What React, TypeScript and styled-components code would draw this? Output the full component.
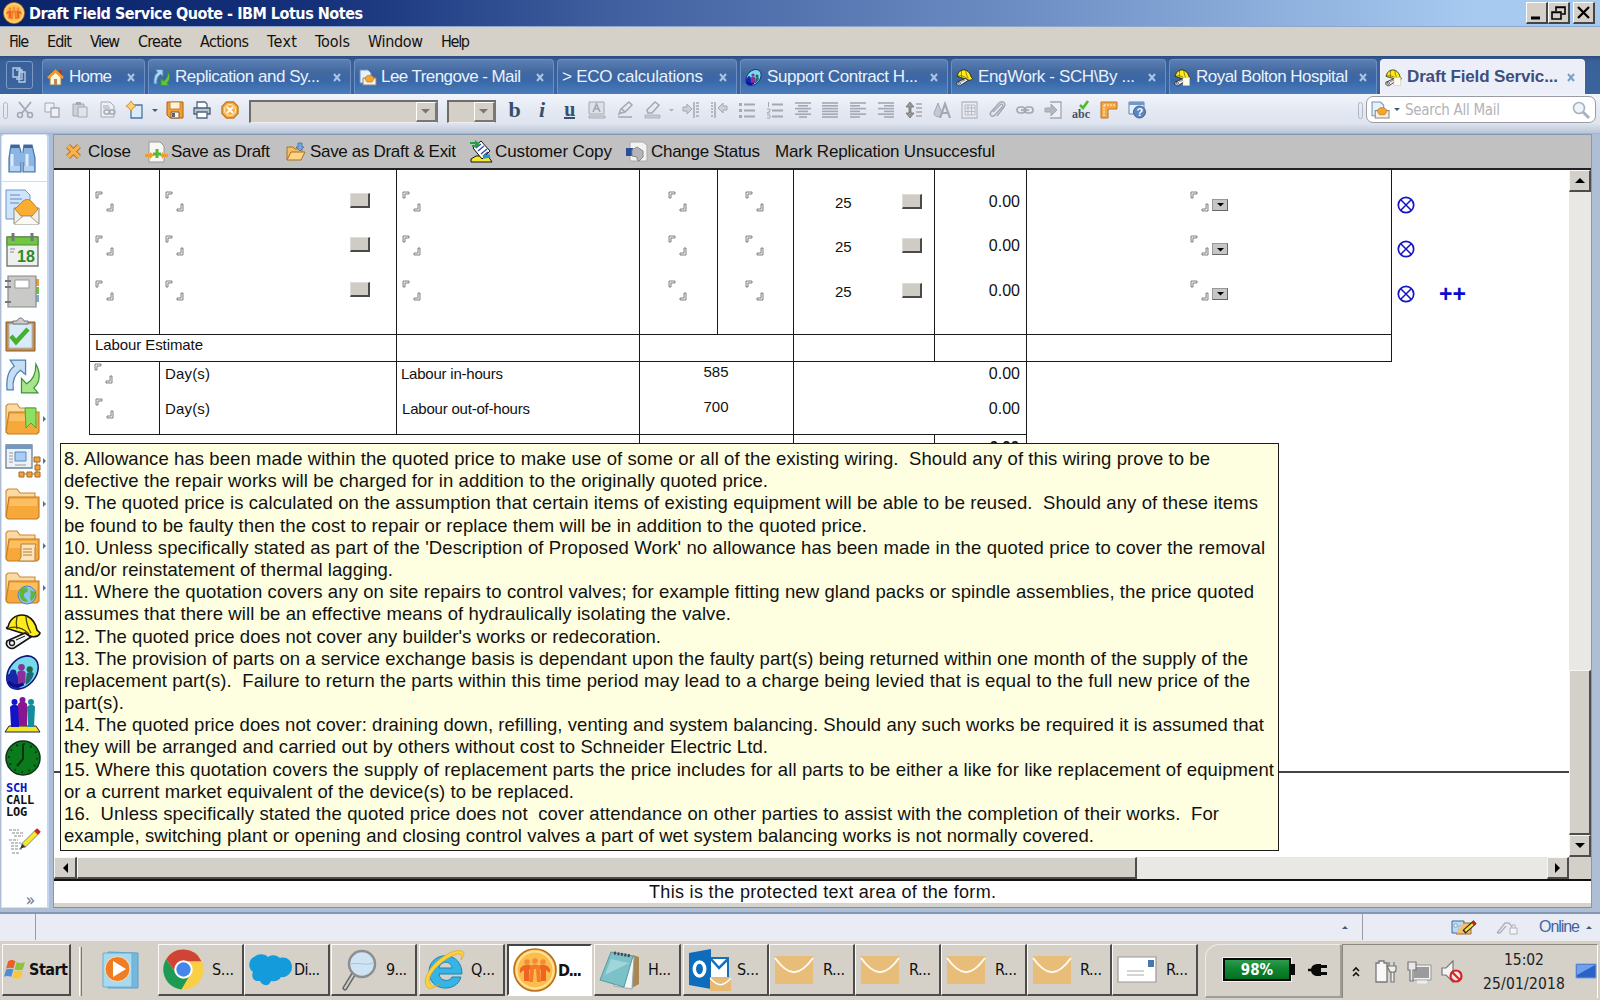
import React, { useLayoutEffect, useRef, useState } from "react";
import styled, { createGlobalStyle } from "styled-components";

const GlobalStyle = createGlobalStyle`
  html, body { margin: 0; padding: 0; overflow: hidden; }
  body { font-family: "Liberation Sans", Arial, sans-serif; color: #111; }
  * { box-sizing: border-box; }
  svg { display: block; flex: none; overflow: visible; }
`;

const arial = `"Liberation Sans", Arial, sans-serif`;
const tahoma = `"DejaVu Sans Condensed", "DejaVu Sans", Tahoma, sans-serif`;

/* Text run whose letter spacing is tuned so that it fills a given width */
const Run = styled.span<{ $w: number }>`
  display: block;
  flex: none;
  width: ${(p) => p.$w}px;
  white-space: pre;
`;
const Fit = ({ w, children }: { w: number; children: string }) => {
  const ref = useRef<HTMLSpanElement>(null);
  const [gap, setGap] = useState(0);
  useLayoutEffect(() => {
    const el = ref.current;
    if (!el) return;
    const natural = el.getBoundingClientRect().width;
    setGap((w - natural) / Math.max(children.length - 1, 1));
  }, [w, children]);
  return (
    <Run $w={w}>
      <span ref={ref} style={{ letterSpacing: gap }}>{children}</span>
    </Run>
  );
};

const Screen = styled.div`
  width: 1600px;
  height: 1000px;
  display: flex;
  flex-direction: column;
  overflow: hidden;
  background: #a9bbd1;
`;

/* ---------- title bar and menu ---------- */
const TitleBar = styled.header`
  height: 27px;
  flex: none;
  display: flex;
  align-items: center;
  padding: 0 5px 0 3px;
  background: linear-gradient(90deg, #0a2469 0%, #15317a 20%, #3f5f9f 38%, #6d8ec4 64%, #a6caf0 92%);
  border-bottom: 1px solid #8ea6cc;
  color: #fff;
  font: bold 16px ${tahoma};
`;
const TitleText = styled.div`margin-left: 4px;`;
const WinButtons = styled.div`
  margin-left: auto;
  display: flex;
`;
const WinButton = styled.div<{ $gap?: boolean }>`
  width: 22px;
  height: 22px;
  margin-left: ${(p) => (p.$gap ? 3 : 0)}px;
  background: #d4d0c8;
  border: 1px solid #fff;
  border-right: 2px solid #454545;
  border-bottom: 2px solid #454545;
`;
const MenuBar = styled.nav`
  height: 29px;
  flex: none;
  display: flex;
  align-items: center;
  gap: 18px;
  padding-left: 9px;
  background: #d5d0c8;
  font: 16px ${tahoma};
`;

/* ---------- tabs ---------- */
const TabBar = styled.div`
  height: 38px;
  flex: none;
  display: flex;
  align-items: flex-end;
  padding-left: 6px;
  background: linear-gradient(180deg, #2c4c7c 0, #3a6099 5px, #39659f 100%);
`;
const Windows = styled.div`
  width: 27px;
  height: 28px;
  margin: 0 9px 5px 0;
  display: flex;
  align-items: center;
  justify-content: center;
  border: 1px solid #7d9ac4;
  border-radius: 3px;
`;
const Tab = styled.div<{ $w: number; $active?: boolean }>`
  width: ${(p) => p.$w}px;
  height: 35px;
  margin-right: 3px;
  display: flex;
  align-items: center;
  gap: 5px;
  padding: 0 9px 0 4px;
  border: 1px solid ${(p) => (p.$active ? "#f2f4fa" : "#6c90c3")};
  border-bottom: none;
  border-radius: 4px 4px 0 0;
  color: ${(p) => (p.$active ? "#3c4f80" : "#e9f2fc")};
  font: ${(p) => (p.$active ? "bold " : "")}17px ${arial};
  background: ${(p) => (p.$active ? "#eceff7" : "linear-gradient(180deg,#5a7fb4 0,#43699f 35%,#3967a8 60%,#4a7dbd 100%)")};
  & > svg:last-child { margin-left: auto; }
`;

/* ---------- toolbar ---------- */
const ToolBar = styled.div`
  height: 39px;
  flex: none;
  display: flex;
  align-items: flex-start;
  padding: 1px 3px 0;
  background: linear-gradient(180deg, #f1f4fa 0, #e4e8f2 45%, #dfe4ef 75%, #b9c6d9 100%);
`;
const Grip = styled.div`
  width: 5px;
  height: 17px;
  margin-top: 7px;
  border: 1px solid #aeb7c6;
  border-radius: 3px;
`;
const Cell = styled.div<{ $w?: number }>`
  width: ${(p) => p.$w ?? 27.6}px;
  height: 30px;
  flex: none;
  display: flex;
  align-items: center;
  justify-content: center;
`;
const Letter = styled.span<{ $kind: "b" | "i" | "u" }>`
  font: bold 22px "Liberation Serif", serif;
  line-height: 20px;
  color: #35506e;
  font-style: ${(p) => (p.$kind === "i" ? "italic" : "normal")};
  ${(p) => p.$kind === "u" && "font-size: 20px; line-height: 15px; border-bottom: 2px solid #35506e;"}
`;
const Combo = styled.div<{ $w: number; $gap: number }>`
  width: ${(p) => p.$w}px;
  height: 23px;
  margin: 5px 0 0 ${(p) => p.$gap}px;
  flex: none;
  display: flex;
  justify-content: flex-end;
  background: #d4d0c8;
  border: 2px solid #6d6d6d;
  border-right: 1px solid #777;
  border-bottom: 1px solid #eee;
`;
const ComboButton = styled.div`
  width: 21px;
  display: flex;
  align-items: center;
  justify-content: center;
  border: 1px solid #fff;
  border-right: 2px solid #777;
  border-bottom: 2px solid #777;
`;
const Search = styled.div`
  width: 230px;
  height: 27px;
  margin: 1px 1px 0 3px;
  padding: 0 5px 0 4px;
  display: flex;
  align-items: center;
  background: #fff;
  border: 1.5px solid #999ca4;
  border-radius: 7px;
  color: #b3b3b7;
  font: 15px ${tahoma};
  & > svg:last-child { margin-left: auto; }
`;
const Push = styled.div`flex: 1;`;

/* ---------- work area ---------- */
const Work = styled.main`
  height: 781px;
  flex: none;
  display: flex;
  background: #aebfd5;
  border-top: 1px solid #a7b5c8;
  border-bottom: 2px solid #8397b3;
`;
const Side = styled.aside`
  width: 48px;
  height: 774px;
  margin: 0 0 0 1px;
  flex: none;
  display: flex;
  flex-direction: column;
  background: #fdfeff;
  border: 1px solid #d5e2f6;
  border-right: 2px solid #c3d5ef;
  border-radius: 4px 4px 0 0;
`;
const SideSlot = styled.div<{ $h?: number; $line?: boolean }>`
  height: ${(p) => p.$h ?? 42.35}px;
  flex: none;
  display: flex;
  align-items: center;
  padding-left: 3px;
  border-bottom: ${(p) => (p.$line ? "1px solid #d8dae2" : "none")};
  gap: 3px;
`;
const CallLog = styled.div`
  font: bold 12px/12px "DejaVu Sans Mono", monospace;
  letter-spacing: -0.2px;
  color: #111;
  padding-left: 1px;
  & > div:first-child { color: #0a16c8; }
`;
const More = styled.div`
  margin-top: auto;
  padding: 0 12px 0 0;
  text-align: right;
  color: #6a7690;
  font: 17px/14px ${tahoma};
`;
const Pane = styled.section`
  width: 1539px;
  height: 774px;
  margin-left: 4px;
  display: flex;
  flex-direction: column;
  background: #fff;
  border: 1px solid #8698b3;
  border-bottom: 1px solid #7c8da8;
`;
const ActionBar = styled.div`
  height: 35px;
  flex: none;
  display: flex;
  align-items: center;
  padding-left: 11px;
  background: #c1c1c1;
  border-bottom: 2px solid #222;
  font: 17px ${arial};
`;
const Action = styled.div<{ $w: number }>`
  width: ${(p) => p.$w}px;
  flex: none;
  display: flex;
  align-items: center;
`;
const ActionIcon = styled.div<{ $w: number }>`
  width: ${(p) => p.$w}px;
  flex: none;
`;
const Viewport = styled.div`
  height: 687px;
  flex: none;
  display: flex;
`;
const Page = styled.div`
  position: relative;
  width: 1515px;
  flex: none;
  padding-left: 35px;
  overflow: hidden;
`;
const Columns = styled.div<{ $h: number }>`
  display: flex;
  height: ${(p) => p.$h}px;
`;
const Column = styled.div<{ $w: number; $open?: boolean; $bottom?: boolean; $pad?: number }>`
  width: ${(p) => p.$w}px;
  flex: none;
  padding-top: ${(p) => p.$pad ?? 0}px;
  border-left: ${(p) => (p.$open ? "none" : "1.4px solid #1a1a1a")};
  border-bottom: ${(p) => (p.$bottom === false ? "none" : "1.4px solid #1a1a1a")};
`;
const Slot = styled.div<{ $left?: number; $h?: number }>`
  height: ${(p) => p.$h ?? 44.4}px;
  display: flex;
  align-items: flex-start;
  padding-left: ${(p) => p.$left ?? 5}px;
  & > svg { margin-top: 10px; }
`;
const Value = styled.div<{ $w: number; $top: number; $left?: number; $align?: string; $size?: number; $bold?: boolean }>`
  width: ${(p) => p.$w}px;
  flex: none;
  margin: ${(p) => p.$top}px 0 0 ${(p) => p.$left ?? 0}px;
  text-align: ${(p) => p.$align ?? "left"};
  font: ${(p) => (p.$bold ? "bold " : "")}${(p) => p.$size ?? 15}px/18px ${arial};
  white-space: pre;
`;
const GreyButton = styled.div<{ $gap: number; $top: number }>`
  width: 20px;
  height: 15px;
  flex: none;
  margin: ${(p) => p.$top}px 0 0 ${(p) => p.$gap}px;
  background: #cfccc6;
  border: 1px solid #dedcd8;
  border-right: 2px solid #4a4a4a;
  border-bottom: 2px solid #4a4a4a;
`;
const DropMark = styled.div`
  width: 16px;
  height: 12px;
  margin: 18px 0 0 2px;
  display: flex;
  align-items: center;
  justify-content: center;
  background: #c6c6c6;
  border: 1px solid #999;
  border-right-color: #666;
  border-bottom-color: #666;
  & > svg { margin: 0; }
`;
const Plus = styled.span`
  margin: 12px 0 0 24px;
  color: #0a0ad0;
  font: bold 23px/24px ${arial};
`;
const Rule = styled.div`
  height: 1.5px;
  margin: 328px 0 0 -35px;
  background: #444;
`;
const Note = styled.div`
  position: absolute;
  left: 6px;
  top: 273px;
  width: 1219px;
  height: 408px;
  padding: 4px 0 0 3px;
  background: #feffe0;
  border: 1.4px solid #1b1b1b;
  font: 18.500px ${arial};
`;
const NoteLine = styled.div`
  height: 22.2px;
  line-height: 22.2px;
`;

/* ---------- scroll bars ---------- */
const VScroll = styled.div`
  width: 22px;
  display: flex;
  flex-direction: column;
  background: #e9e8e5;
`;
const HScroll = styled.div`
  height: 22px;
  flex: none;
  display: flex;
  background: #e9e8e5;
`;
const Raised = styled.div<{ $w?: number; $h?: number }>`
  width: ${(p) => p.$w ?? 22}px;
  height: ${(p) => p.$h ?? 22}px;
  flex: none;
  display: flex;
  align-items: center;
  justify-content: center;
  background: #d3d0c9;
  border: 1px solid #f8f7f5;
  border-right: 2px solid #4d4d4d;
  border-bottom: 2px solid #4d4d4d;
`;
const Corner = styled.div`width: 22px; background: #d3d0c9;`;
const Protected = styled.div`
  height: 28px;
  flex: none;
  display: flex;
  justify-content: center;
  border-top: 2px solid #111;
  border-bottom: 4px solid #d6d3cc;
  font: 18px/23px ${arial};
`;

/* ---------- status bar ---------- */
const Status = styled.div`
  height: 26px;
  flex: none;
  display: flex;
  align-items: center;
  background: #e9ecf5;
  color: #41649f;
  font: 16px ${arial};
`;
const StatusPart = styled.div<{ $w: number; $line?: boolean }>`
  width: ${(p) => p.$w}px;
  height: 26px;
  flex: none;
  display: flex;
  align-items: center;
  justify-content: flex-end;
  border-right: ${(p) => (p.$line ? "1px solid #9a9da6" : "none")};
`;

/* ---------- taskbar ---------- */
const TaskBar = styled.footer`
  flex: 1;
  display: flex;
  align-items: flex-start;
  padding: 3px 2px 0;
  background: #d5d1c9;
  border-top: 1px solid #eeece8;
  font: 16px ${tahoma};
`;
const Task = styled.div<{ $w: number; $active?: boolean; $gap?: number }>`
  width: ${(p) => p.$w}px;
  height: 52px;
  margin-right: ${(p) => p.$gap ?? 1}px;
  flex: none;
  display: flex;
  align-items: center;
  justify-content: space-between;
  padding: 0 8px 0 4px;
  font-weight: ${(p) => (p.$active ? "bold" : "normal")};
  background: ${(p) => (p.$active ? "#fff" : "#d5d1c9")};
  border: 2px solid;
  border-color: ${(p) => (p.$active ? "#444 #fff #fff #444" : "#fbfaf8 #4c4c4c #4c4c4c #fbfaf8")};
  border-top-width: ${(p) => (p.$active ? 2 : 1)}px;
  border-left-width: ${(p) => (p.$active ? 2 : 1)}px;
`;
const StartButton = styled(Task)`
  justify-content: flex-start;
  gap: 2px;
  padding: 0 0 0 1px;
`;
const Divider = styled.div`
  width: 3px;
  height: 49px;
  margin: 3px 0 0 8px;
  border-left: 1px solid #fff;
  border-right: 1px solid #777;
`;
const Quick = styled.div`
  width: 76px;
  height: 52px;
  display: flex;
  align-items: center;
  padding-left: 20px;
`;
const Power = styled.div`
  width: 137px;
  height: 54px;
  margin-left: 7px;
  padding: 0 0 2px 17px;
  display: flex;
  align-items: center;
  border: 1px solid #eeece6;
  border-right: 2px solid #a09d97;
  border-bottom: 2px solid #a09d97;
  border-radius: 14px 3px 0 0;
`;
const Battery = styled.div`
  width: 68px;
  height: 23px;
  display: flex;
  align-items: center;
  justify-content: center;
  color: #fff;
  font: bold 15px ${tahoma};
  background: linear-gradient(180deg, #2f9a4c 0, #0f8533 45%, #05701f 100%);
  border: 2px solid #0a0a0a;
  outline: 1px solid #f3f3ee;
`;
const Nub = styled.div`
  width: 4px;
  height: 11px;
  margin-right: 12px;
  background: #0a0a0a;
`;
const Tray = styled.div`
  flex: 1;
  height: 54px;
  display: flex;
  align-items: center;
  padding-left: 9px;
  border-top: 1px solid #8a8780;
  border-left: 1px solid #8a8780;
  border-right: 1px solid #fff;
`;
const Clock = styled.div`
  width: 98px;
  height: 48px;
  display: flex;
  flex-direction: column;
  align-items: center;
  justify-content: space-between;
  margin: 0 3px 0 11px;
  font: 15.5px/24px ${tahoma};
  color: #222;
`;
const TrayIcon = styled.div<{ $w: number }>`width: ${(p) => p.$w}px;`;

/* ---------- small drawings ---------- */
const Svg = ({ w = 18, h = w, vb, children }: { w?: number; h?: number; vb?: string; children: React.ReactNode }) => (
  <svg width={w} height={h} viewBox={vb ?? `0 0 ${w} ${h}`} fill="none">{children}</svg>
);
const Tri = ({ dir, s = 1, c = "#000" }: { dir: "u" | "d" | "l" | "r"; s?: number; c?: string }) => {
  const d = { u: "M0 5 5 0l5 5Z", d: "M0 0h10L5 5Z", l: "M5 0v10L0 5Z", r: "M0 0v10l5-5Z" }[dir];
  const flat = dir === "u" || dir === "d";
  return <Svg w={(flat ? 10 : 5) * s} h={(flat ? 5 : 10) * s} vb={flat ? "0 0 10 5" : "0 0 5 10"}><path d={d} fill={c} /></Svg>;
};
const CloseX = ({ c = "#a9c6e6" }) => <Svg w={8} h={9}><path d="m1 1 6 7M7 1 1 8" stroke={c} strokeWidth="2" /></Svg>;

const LotusIcon = ({ s = 22 }) => (
  <Svg w={s} vb="0 0 44 44">
    <circle cx="22" cy="22" r="21" fill="#fbbd4c" stroke="#b96f1d" strokeWidth="1.600" />
    <circle cx="22" cy="22" r="18.500" stroke="#ffe39b" strokeWidth="2" />
    <path d="M17 17c-8-1-11 3-10 8l4-3v11h5V22l2-2ZM27 17c8-1 11 3 10 8l-4-3v11h-5V22l-2-2Z" fill="#ee6420" />
    <path d="M17 18c3-2 7-2 10 0l1 16h-4l-1-13h-2l-1 13h-4Z" fill="#f47b2a" />
    <circle cx="14" cy="14" r="2.800" fill="#f58a3c" /><circle cx="22" cy="13" r="2.800" fill="#f58a3c" /><circle cx="30" cy="14" r="2.800" fill="#f58a3c" />
  </Svg>
);
const HomeIcon = () => (
  <Svg w={17}>
    <path d="M3 8v8h11V8L8.500 3Z" fill="#fff3d8" stroke="#9a7c56" />
    <path d="M12 2h2v4" stroke="#b23a20" strokeWidth="2" />
    <path d="M1 9 8.500 2 16 9" stroke="#f09a2c" strokeWidth="2.500" /><path d="M7 10h3v6H7Z" fill="#b08a5c" />
  </Svg>
);
const Replicate = ({ s = 17, side = false }) => (
  <Svg w={s} vb="0 0 34 34">
    <path d="M2 30C1 18 3 11 9 7L5 1h15v14l-5-4C9 15 7 21 8 30Z" fill={side ? "#c6ddf5" : "#a7d5ee"} stroke="#4b80b5" strokeWidth={side ? 1.200 : 2} />
    <path d="M30 5c5 9 4 18-2 23l4 5H16V19l5 5c7-4 9-11 9-19Z" fill={side ? "#a8e48c" : "#62c43c"} stroke="#3a9636" strokeWidth={side ? 1.200 : 2} />
  </Svg>
);
const MailTabIcon = ({ s = 17 }) => (
  <Svg w={s} vb="0 0 17 17">
    <path d="M1 1h8l3 3v10H1Z" fill="#e6f1fd" stroke="#6f94bf" />
    <path d="M4 9h13v7H4Z" fill="#f4f1ea" stroke="#8c8878" /><path d="M6 10c0-5 9-5 9 0l-2 3H8Z" fill="#f6a62c" stroke="#bd7c1c" strokeWidth=".7" />
  </Svg>
);
const GlobeTeam = ({ s = 17 }) => (
  <Svg w={s} vb="0 0 34 34">
    <ellipse cx="17" cy="17" rx="13" ry="18" transform="rotate(40 17 17)" fill="#74dbea" stroke="#12127a" strokeWidth="1.500" />
    <path d="M2 20c4-4 7-4 10-1l3 12C8 36 2 32 2 24Z" fill="#1826a8" />
    <circle cx="8" cy="17" r="3" fill="#1826a8" /><circle cx="16" cy="12" r="3.200" fill="#8c2f9c" />
    <path d="M12 17c2-3 6-3 8 0v10l-7 4Z" fill="#8c2f9c" /><circle cx="24" cy="14" r="3" fill="#226846" />
    <path d="M21 18c2-2 6-2 7 0-1 5-4 9-8 11Z" fill="#1c6c74" /><path d="M3 26c5 5 10 5 15 2" stroke="#0c0c90" strokeWidth="3" />
  </Svg>
);
const HardHat = ({ s = 17, page = false }) => (
  <Svg w={s} vb="0 0 36 36">
    <path d="M3 14C5 4 14 0 22 3c6 3 9 9 10 14l3 3c-1 4-8 5-12 2L4 16c-3 0-3-2-1-2Z" fill="#ffec1f" stroke="#151500" strokeWidth="1.600" />
    <path d="M12 3c-1 5-1 9 0 13M21 3c0 7 2 12 5 17M4 15c7-2 14 0 20 6" stroke="#4b4700" strokeWidth="1.300" />
    <path d="m2 28 18-8 6 4-17 11c-5 2-9-3-7-7Z" fill="#f3f3f3" stroke="#111" strokeWidth="1.600" /><circle cx="7" cy="30" r="2.500" stroke="#111" strokeWidth="1.300" />
    <path d="m11 27 9-4" stroke="#111" strokeWidth="1" />
    {page && <path d="M19 18h14v17H19Z" fill="#fffbea" stroke="#bbb" />}
  </Svg>
);

const tabs = [
  { w: 103, icon: <HomeIcon />, text: "Home", tw: 43 },
  { w: 203, icon: <Replicate />, text: "Replication and Sy...", tw: 145 },
  { w: 200, icon: <MailTabIcon />, text: "Lee Trengove - Mail", tw: 140 },
  { w: 180, icon: null, text: "> ECO calculations", tw: 141 },
  { w: 208, icon: <GlobeTeam />, text: "Support Contract H...", tw: 151 },
  { w: 215, icon: <HardHat />, text: "EngWork - SCH\\By ...", tw: 157 },
  { w: 208, icon: <HardHat page />, text: "Royal Bolton Hospital", tw: 152 },
  { w: 205, icon: <HardHat page />, text: "Draft Field Servic...", tw: 151 },
];

/* toolbar drawings, greyed ones first */
const G = "#a3a8b3";
const lines = (rows: [number, number][]) => (
  <Svg w={18}>{rows.map(([a, b], i) => <path key={i} d={`M${a} ${2 + i * 2.8}H${b}`} stroke={G} strokeWidth="1.600" />)}</Svg>
);
const leftTools = [
  <Svg w={18}><path d="m3 1 9 11M15 1 6 12" stroke={G} strokeWidth="1.800" /><circle cx="4" cy="14" r="2.500" stroke={G} strokeWidth="1.600" /><circle cx="14" cy="14" r="2.500" stroke={G} strokeWidth="1.600" /></Svg>,
  <Svg w={18}><path d="M2 2h9v9H2Z" fill="#eef1f7" stroke={G} /><path d="M8 7h8v9H8Z" fill="#eef1f7" stroke={G} strokeWidth="1.300" /></Svg>,
  <Svg w={18}><path d="M2 3h11v12H2Z" fill="#cdd1da" stroke={G} /><path d="M5 1h5v3H5Z" fill={G} /><path d="M7 6h9v10H7Z" fill="#dfe3eb" stroke={G} /></Svg>,
  <Svg w={18}><path d="M2 1h9l4 4v11H2Z" fill="#eceff5" stroke={G} /><path d="M4 5h6M4 7h7" stroke={G} /><rect x="5" y="9" width="6" height="4" rx="2" stroke={G} strokeWidth="1.400" /><rect x="10" y="9" width="6" height="4" rx="2" stroke={G} strokeWidth="1.400" /></Svg>,
  <Svg w={18}><path d="M5 4h11v13H5Z" fill="#dcebfa" stroke="#4c75a5" strokeWidth="1.300" /><path d="m5 0 2 3 3 2-3 2-2 3-2-3-3-2 3-2Z" fill="#ffd27a" stroke="#d8902a" /></Svg>,
];
const leftTools2 = [
  <Svg w={18}><path d="M1 1h16v16H4l-3-3Z" fill="#f59f35" stroke="#a8601a" /><path d="M4 1h10v7H4Z" fill="#fff2da" stroke="#b8762a" strokeWidth=".8" /><path d="M5 11h8v6H5Z" fill="#f5f5f5" stroke="#8a5a28" /><path d="M6 12h3v4H6Z" fill="#55657c" /></Svg>,
  <Svg w={18}><path d="M4 7V1h8l2 2v4" fill="#fff" stroke="#52667f" strokeWidth="1.300" /><path d="M1 7h16v6H1Z" fill="#bac6d6" stroke="#4a5e79" strokeWidth="1.300" /><path d="M4 11h10v6H4Z" fill="#fff" stroke="#52667f" strokeWidth="1.300" /></Svg>,
  <Svg w={18}><path d="M5.500 1h7L17 5.500v7L12.500 17h-7L1 12.500v-7Z" fill="#f7b045" stroke="#c07c22" strokeWidth="1.400" /><circle cx="9" cy="9" r="5.500" stroke="#fff0cf" /><path d="m6 6 6 6m0-6-6 6" stroke="#fffaf0" strokeWidth="2" /></Svg>,
];
const fmtTools = [
  <Svg w={18}><path d="M1 1h15v12H1ZM1 15h16v2H1Z" fill="#dde1e9" stroke={G} /><path d="M5 11 8.500 3 12 11M6 8h5" stroke={G} strokeWidth="1.700" /></Svg>,
  <Svg w={18}><path d="m3 13 2-5 8-7 3 3-7 7-4 1ZM6 8l3 3M2 16h14" stroke={G} strokeWidth="1.500" /></Svg>,
  <Svg w={18}><path d="m3 9 8-8 4 3-7 8H4Z" stroke={G} strokeWidth="1.500" /><path d="M1 14h15v3H1Z" fill="#c7cbd4" stroke={G} strokeWidth=".7" /></Svg>,
];
const paraTools = [
  <Svg w={18}><path d="M1 6h4V3l5 5-5 5v-3H1Z" fill="#cdd1d9" stroke={G} /><path d="M12 1v16M14 2h3M14 5h3M14 8h3M14 11h3M14 15h3" stroke={G} strokeWidth="1.500" /></Svg>,
  <Svg w={18}><path d="M17 5h-4V2L8 7l5 5V9h4Z" fill="#cdd1d9" stroke={G} /><path d="M5 1v16M1 2h2M1 5h2M1 8h2M1 11h2M1 15h2" stroke={G} strokeWidth="1.500" /></Svg>,
  <Svg w={18}><path d="M1 2h3v3H1ZM1 8h3v3H1ZM1 14h3v3H1Z" fill={G} /><path d="M6 3.500h11M6 9.500h11M6 15.500h11" stroke={G} strokeWidth="1.800" /></Svg>,
  <Svg w={18}><path d="M2.500 1v5M1 8h3v2L1 12h3M1 14h3v3H1" stroke={G} /><path d="M6 3.500h11M6 9.500h11M6 15.500h11" stroke={G} strokeWidth="1.800" /></Svg>,
  lines([[1, 17], [4, 14], [1, 17], [4, 14], [1, 17], [5, 13]]),
  lines([[1, 17], [1, 17], [1, 17], [1, 17], [1, 17], [1, 17]]),
  lines([[1, 17], [1, 11], [1, 17], [1, 11], [1, 17], [1, 11]]),
  lines([[1, 17], [7, 17], [1, 17], [7, 17], [1, 17], [7, 17]]),
  <Svg w={18}><path d="m5 1 4 5H6v6h3l-4 5-4-5h3V6H1Z" fill="#999" stroke="#666" strokeWidth=".7" /><path d="M11 3h6M11 7h6M11 11h6M11 15h6" stroke={G} strokeWidth="1.700" /></Svg>,
  <Svg w={18}><path d="m1 12 4-10 4 10c0 5-8 5-8 0Z" fill="#c3c8d2" stroke={G} /><path d="m7 17 5-14 5 14M9 12h6" stroke={G} strokeWidth="2.200" /></Svg>,
  <Svg w={18}><path d="M1 1h15v16H1Z" fill="#e9ecf2" stroke="#b6bac4" strokeWidth="1.300" /><path d="M4 4h10v10H4ZM4 7h10M4 10.500h10M7 4v10M10.500 4v10" stroke="#b6bac4" /></Svg>,
  <Svg w={18}><path d="m4 11 7-7c2-2 4 0 2 2l-7 8c-3 3-6 0-4-3l8-9c3-3 8 0 5 4l-7 9" stroke={G} strokeWidth="1.400" /></Svg>,
  <Svg w={18}><rect x="1" y="6" width="8" height="6" rx="3" stroke={G} strokeWidth="1.700" /><rect x="9" y="6" width="8" height="6" rx="3" stroke={G} strokeWidth="1.700" /><path d="M5 9h8" stroke={G} strokeWidth="1.700" /></Svg>,
  <Svg w={18}><path d="M6 1h11v16H6" fill="#eceff4" stroke={G} strokeWidth="1.300" /><path d="M1 7h6V3l6 6-6 6v-4H1Z" fill="#b3b8c3" stroke={G} /></Svg>,
  <Svg w={18}><text x="0" y="17" fontFamily="Liberation Serif" fontWeight="bold" fontSize="12" fill="#44505f">abc</text><path d="m8 4 3 3 5-7" stroke="#52b832" strokeWidth="2.600" /></Svg>,
  <Svg w={18}><path d="M1 1h16v7H8v9H1Z" fill="#f6a742" stroke="#b8742a" /><path d="M4 4h11M4 4v11" stroke="#ffe0a6" strokeWidth="1.500" strokeDasharray="2 1" /></Svg>,
  <Svg w={18}><path d="M1 1h15v12H1Z" fill="#e2effc" stroke="#6285b0" /><path d="M1 1h15v3H1Z" fill="#7398c5" /><circle cx="11.500" cy="11" r="6" fill="#5986bd" stroke="#39659b" /><text x="8.500" y="15" fontFamily="Liberation Sans" fontWeight="bold" fontSize="11" fill="#fff">?</text></Svg>,
];

/* side bar drawings */
const Folder = ({ children }: { children?: React.ReactNode }) => (
  <Svg w={35} h={32}>
    <path d="M1 28V3l2-2h9l3 4h15v6" fill="#fbd9a2" stroke="#c98a35" strokeWidth="1.100" />
    <path d="M4 9h30v20l-2 2H3l-2-2Z" fill="#f7a83a" stroke="#c27a1e" strokeWidth="1.100" />
    <path d="M5 11h27v7H4Z" fill="#fbc56f" opacity=".8" />
    {children}
  </Svg>
);
const sideIcons: { icon: React.ReactNode; more?: boolean }[] = [
  { icon: <Svg w={35} h={36}><path d="M1 1h19l5 5v24H1Z" fill="#cfe3fa" stroke="#6c96c9" /><path d="M5 6h10M5 10h12M5 14h9" stroke="#86a9d2" strokeWidth="1.600" /><path d="M9 19h25v16H9Z" fill="#efede6" stroke="#8f8b80" /><path d="m10 20 8-8c3-2 6-2 8 0l7 8-6 7H16Z" fill="#f9ae31" stroke="#c37f1f" /><path d="m9 35 9-8h7l9 8" stroke="#a09b8d" fill="#faf9f4" /></Svg> },
  { icon: <Svg w={35} h={35}><path d="M2 5h31v29H2Z" fill="#eef0ee" stroke="#75796f" strokeWidth="1.400" /><path d="M2 5h31v8H2Z" fill="#6fc83f" stroke="#4c8f36" /><path d="M8 1v8M27 1v8" stroke="#777" strokeWidth="3" /><path d="M5 17h5M5 20h4" stroke="#888" /><text x="12" y="30" fontFamily="Liberation Sans" fontWeight="bold" fontSize="16" fill="#2e8a2a">18</text></Svg> },
  { icon: <Svg w={35} h={35}><path d="M30 5h4v7h-4Z" fill="#f0992c" /><path d="M30 13h4v7h-4Z" fill="#6ac53c" /><path d="M30 21h4v7h-4Z" fill="#7aa9de" /><path d="M3 2h28v31H3Z" fill="#c9c9c7" stroke="#8b8b84" strokeWidth="1.200" /><path d="M10 6h14v8H10Z" fill="#fff" stroke="#999" /><path d="M0 7h6M0 13h6M0 28h6" stroke="#777" strokeWidth="2.200" /></Svg> },
  { icon: <Svg w={31} h={35}><path d="M1 5h29v29H1Z" fill="#c98b48" stroke="#8a5a26" /><path d="M4 7h23v24H4Z" fill="#d9eafb" stroke="#a9bdd2" /><path d="M8 7V4h4c1-4 6-4 7 0h4v3Z" fill="#ccc" stroke="#777" /><path d="m6 19 5 6L23 12" stroke="#46b02e" strokeWidth="4.500" /></Svg> },
  { icon: <Replicate s={35} side /> },
  { more: true, icon: <Folder><path d="M20 5h11v20l-5-5-5 5Z" fill="#8ee062" stroke="#4aa52e" /></Folder> },
  { more: true, icon: <Svg w={35} h={36}><path d="M1 2h26v23H1Z" fill="#edf2f7" stroke="#6e7f96" strokeWidth="1.300" /><path d="M1 2h26v4H1Z" fill="#7498c4" /><path d="M10 9h11v9H10Z" fill="#a9cdf7" stroke="#5a86b8" /><path d="M4 10h4M4 13h4M4 16h4M4 19h4M10 22h11" stroke="#999" /><path d="M17 31h15V17" stroke="#777" /><path d="M14 29h5v5h-5ZM22 29h5v5h-5ZM30 29h5v5h-5ZM30 22h5v5h-5ZM29 14h6v5h-6Z" fill="#f2a13a" stroke="#a86b20" /></Svg> },
  { more: true, icon: <Folder /> },
  { more: true, icon: <Folder><path d="M16 14h15l-1 4v13H14l2-4Z" fill="#fbe5bd" stroke="#b77f33" /><path d="M18 19h9M18 22h9M18 25h9" stroke="#b77f33" /></Folder> },
  { more: true, icon: <Folder><circle cx="22" cy="23" r="9" fill="#8fc3ec" stroke="#4e83b5" /><path d="M15 18c3-4 8-3 8 0s-5 2-4 6 5 3 3 6c-6 0-9-6-7-12ZM25 18l5 2c1 4-1 7-4 9-2-4 1-6-1-11Z" fill="#5eb541" /></Folder> },
  { icon: <HardHat s={36} /> },
  { icon: <GlobeTeam s={35} /> },
  { icon: <Svg w={35} h={35}><path d="m4 28-4 6h35l-4-6Z" fill="#f1e432" stroke="#222" /><path d="M5 9c2-3 7-3 9 0v20H6Z" fill="#1313c8" /><path d="M22 9c2-3 7-3 8 0l-1 20h-6Z" fill="#138c9c" /><path d="M13 6c2-3 7-3 9 0v22h-8Z" fill="#8a1590" /><circle cx="9.500" cy="4" r="3" fill="#1313c8" /><circle cx="17.500" cy="2" r="3" fill="#8a1590" /><circle cx="26" cy="4" r="3" fill="#138c9c" /></Svg> },
  { icon: <Svg w={36}><circle cx="18" cy="18" r="17" fill="#0a7a1c" stroke="#10301a" strokeWidth="1.500" /><circle cx="18" cy="18" r="14" stroke="#06340c" strokeWidth="2" strokeDasharray="1.500 5.830" /><path d="M18 4v15l-6 7" stroke="#031" strokeWidth="2" /></Svg> },
];

const CornerMarks = () => (
  <Svg w={20} h={21}>
    <path d="M1 7V1h6v2H3v4Z" fill="#eee" stroke="#777" strokeWidth=".9" />
    <path d="M18 13v7h-6v-2h4v-5Z" fill="#eee" stroke="#777" strokeWidth=".9" />
  </Svg>
);
const Remove = () => (
  <Svg w={18}><circle cx="9" cy="9" r="7.700" stroke="#1414c4" strokeWidth="1.700" /><path d="m4 4 10 10M14 4 4 14" stroke="#1414c4" strokeWidth="1.500" /></Svg>
);

const noteLines: [string, number][] = [
  ["8. Allowance has been made within the quoted price to make use of some or all of the existing wiring.  Should any of this wiring prove to be", 1146],
  ["defective the repair works will be charged for in addition to the originally quoted price.", 704],
  ["9. The quoted price is calculated on the assumption that certain items of existing equipment will be able to be reused.  Should any of these items", 1194],
  ["be found to be faulty then the cost to repair or replace them will be in addition to the quoted price.", 803],
  ["10. Unless specifically stated as part of the 'Description of Proposed Work' no allowance has been made in the quoted price to cover the removal", 1201],
  ["and/or reinstatement of thermal lagging.", 329],
  ["11. Where the quotation covers any on site repairs to control valves; for example fitting new gland packs or spindle assemblies, the price quoted", 1190],
  ["assumes that there will be an effective means of hydraulically isolating the valve.", 667],
  ["12. The quoted price does not cover any builder's works or redecoration.", 597],
  ["13. The provision of parts on a service exchange basis is dependant upon the faulty part(s) being returned within one month of the supply of the", 1184],
  ["replacement part(s).  Failure to return the parts within this time period may lead to a charge being levied that is equal to the full new price of the", 1186],
  ["part(s).", 60],
  ["14. The quoted price does not cover: draining down, refilling, venting and system balancing. Should any such works be required it is assumed that", 1200],
  ["they will be arranged and carried out by others without cost to Schneider Electric Ltd.", 704],
  ["15. Where this quotation covers the supply of replacement parts the price includes for all parts to be either a like for like replacement of equipment", 1210],
  ["or a current market equivalent of the device(s) to be replaced.", 510],
  ["16.  Unless specifically stated the quoted price does not  cover attendance on other parties to assist with the completion of their works.  For", 1155],
  ["example, switching plant or opening and closing control valves a part of wet system balancing works is not normally covered.", 1030],
];

const Envelope = () => (
  <Svg w={40} h={30}><path d="M1 1h38v28H1Z" fill="#e8bd7a" /><path d="M1 3c14 19 24 19 38 0" stroke="#fffaf0" strokeWidth="2" /></Svg>
);
const tasks: { w: number; gap?: number; icon: React.ReactNode; text: string; tw: number; active?: boolean }[] = [
  { w: 86, gap: 0, text: "S...", tw: 22, icon: <Svg w={41} vb="0 0 40 40"><circle cx="20" cy="20" r="19.500" fill="#f9cf45" /><path d="M3 10A19.500 19.500 0 0 1 37.500 12H20a8 8 0 0 0-7.500 11Z" fill="#d04437" /><path d="M3 10a19.500 19.500 0 0 0 15 29.400l8.500-14.500A8 8 0 0 1 13 24Z" fill="#1f9a55" /><circle cx="20" cy="20" r="9" fill="#fff" /><circle cx="20" cy="20" r="7" fill="#4586ec" /></Svg> },
  { w: 86, gap: 1, text: "Di...", tw: 26, icon: <Svg w={44} h={32}><path d="M5 3c5-4 11-3 14 0 4-3 9-2 12 1 7-2 12 3 12 9s-5 11-11 10c-2 4-7 5-10 4-2 6-9 5-11 0C4 28 2 22 4 18-2 14 0 5 5 3Z" fill="#139bdc" /></Svg> },
  { w: 86, gap: 2, text: "9...", tw: 21, icon: <Svg w={43} h={42}><path d="M17 26 9 39" stroke="#666" strokeWidth="5" strokeLinecap="round" /><path d="M17 26 9 39" stroke="#ccc" strokeWidth="2" strokeLinecap="round" /><circle cx="26" cy="15" r="13" fill="#cfe3f3" stroke="#8c8f92" strokeWidth="2.500" /><path d="M15 15c8-2 14 2 22-1" stroke="#a3c3dd" /></Svg> },
  { w: 86, gap: 2, text: "Q...", tw: 24, icon: <Svg w={43} h={42}><path d="M38 25H15c1 8 11 8 13 3h9C33 44 5 43 5 23 5 2 38 0 38 25ZM28 19c-1-8-12-7-13 0Z" fill="#36b4e5" stroke="#1c84b5" /><path d="M3 38C-6 25 24-2 38 2c4 2 1 6-1 9 1-5 0-7-4-6C18 10 2 26 6 34c2 5 6 3 9 1-4 4-9 6-12 3Z" fill="#fbd13c" stroke="#d3a21d" strokeWidth=".6" /></Svg> },
  { w: 85, gap: 2, text: "D...", tw: 24, active: true, icon: <LotusIcon s={44} /> },
  { w: 87, gap: 2, text: "H...", tw: 23, icon: <Svg w={41} h={40}><path d="m34 5 6 2v27l-7 4Z" fill="#a98755" /><path d="m14 3 21 4-2 32-18-3Z" fill="#f3f7f7" stroke="#9aa" /><path d="m12 2 22 4-9 31L1 30Z" fill="#7cc0c8" stroke="#5599a3" /><path d="m15 3 17 3" stroke="#445" strokeWidth="3" strokeDasharray="2 1.500" /><path d="m12 9 18 4L6 25Z" fill="#b9e2e6" opacity=".6" /></Svg> },
  { w: 86, gap: 0, text: "S...", tw: 22, icon: <Svg w={43} h={42}><path d="M22 9h18v20H22Z" fill="#fff" stroke="#1470bd" strokeWidth="2" /><path d="m23 10 8 9 9-9" stroke="#1470bd" strokeWidth="2.500" /><path d="M1 4 23 0v40L1 36Z" fill="#0d6cbc" /><ellipse cx="11.500" cy="20" rx="5.200" ry="7" stroke="#fff" strokeWidth="3.500" /><path d="M22 28h21v14H22Z" fill="#e6b977" /><path d="M22 29c8 9 13 9 21 0" stroke="#fff" strokeWidth="1.300" /></Svg> },
  { w: 86, gap: 0, text: "R...", tw: 22, icon: <Envelope /> },
  { w: 86, gap: 0, text: "R...", tw: 22, icon: <Envelope /> },
  { w: 86, gap: 0, text: "R...", tw: 22, icon: <Envelope /> },
  { w: 85, gap: 0, text: "R...", tw: 22, icon: <Envelope /> },
  { w: 86, gap: 0, text: "R...", tw: 22, icon: <Svg w={40} h={27}><path d="M1 1h38v25H1Z" fill="#fff" stroke="#999" strokeWidth="1.200" /><path d="M31 4h6v7h-6Z" fill="#4579ad" /><path d="M10 15h17M10 19h17" stroke="#aaa" /></Svg> },
];

const Flag = () => (
  <Svg w={23} h={23} vb="0 0 22 22"><path d="M4 3c3-2 5-1 7 0L9 10c-2-1-4-1-7 0Z" fill="#e8602c" /><path d="M12 4c3 1 5 1 8 0l-2 7c-3 1-5 1-8 0Z" fill="#8cc43a" /><path d="M2 11c3-1 5-1 7 0l-2 7c-3-1-5-1-7 0Z" fill="#4d8fd6" /><path d="M10 12c3 1 5 1 8 0l-2 7c-3 1-5 1-8 0Z" fill="#fbc637" /></Svg>
);

const CellTop = styled.div`margin-top: 15px;`;
const Lifted = styled.div`margin-top: 1px;`;
const TotalClip = styled.div`height: 8px; overflow: hidden;`;

const three = [0, 1, 2];
const menus: [string, number][] = [["File", 20], ["Edit", 25], ["View", 30], ["Create", 44], ["Actions", 49], ["Text", 30], ["Tools", 35], ["Window", 55], ["Help", 29]];

export default function App() {
  return (
    <Screen>
      <GlobalStyle />
      <TitleBar>
        <LotusIcon />
        <TitleText><Fit w={334}>Draft Field Service Quote - IBM Lotus Notes</Fit></TitleText>
        <WinButtons>
          <WinButton><Svg w={18}><path d="M4 15h9" stroke="#000" strokeWidth="3" /></Svg></WinButton>
          <WinButton><Svg w={18}><path d="M7 8V4h9v7h-3M7 4.500h9M3 9h9v7H3ZM3 9.500h9" stroke="#000" strokeWidth="1.600" /></Svg></WinButton>
          <WinButton $gap><Svg w={18}><path d="m4 4 11 11M15 4 4 15" stroke="#000" strokeWidth="2.300" /></Svg></WinButton>
        </WinButtons>
      </TitleBar>
      <MenuBar>{menus.map(([t, w]) => <Fit key={t} w={w}>{t}</Fit>)}</MenuBar>
      <TabBar>
        <Windows><Svg w={15} h={16}><path d="M1 1h7v9H1ZM4 3h6v9H4M7 5h6v10H7Z" stroke="#b9cde6" strokeWidth="1.300" /></Svg></Windows>
        {tabs.map((t, i) => (
          <Tab key={i} $w={t.w} $active={i === 7}>
            {t.icon}
            <Fit w={t.tw}>{t.text}</Fit>
            <CloseX c={i === 7 ? "#7d9fc2" : undefined} />
          </Tab>
        ))}
      </TabBar>
      <ToolBar>
        <Grip />
        <Cell $w={3} />
        {leftTools.map((x, i) => <Cell key={i}>{x}</Cell>)}
        <Cell $w={12}><Tri dir="d" s={0.6} c="#445b80" /></Cell>
        {leftTools2.map((x, i) => <Cell key={i}>{x}</Cell>)}
        <Combo $w={189} $gap={5}><ComboButton><Tri dir="d" s={0.9} c="#777" /></ComboButton></Combo>
        <Combo $w={49} $gap={9}><ComboButton><Tri dir="d" s={0.9} c="#777" /></ComboButton></Combo>
        <Cell $w={5} />
        <Cell><Letter $kind="b">b</Letter></Cell>
        <Cell><Letter $kind="i">i</Letter></Cell>
        <Cell><Letter $kind="u">u</Letter></Cell>
        {fmtTools.map((x, i) => <Cell key={i}>{x}</Cell>)}
        <Cell $w={11}><Tri dir="d" s={0.5} c="#aab0bb" /></Cell>
        {paraTools.map((x, i) => <Cell key={i} $w={27.85}>{x}</Cell>)}
        <Push />
        <Grip />
        <Search>
          <MailTabIcon s={18} />
          <Cell $w={16}><Tri dir="d" s={0.6} c="#445b80" /></Cell>
          <Fit w={95}>Search All Mail</Fit>
          <Svg w={18}><circle cx="7" cy="7" r="5.500" fill="#eef4fa" stroke="#a7b3c0" strokeWidth="1.600" /><path d="m11 11 6 6" stroke="#a7b3c0" strokeWidth="3" /></Svg>
        </Search>
      </ToolBar>

      <Work>
        <Side>
          <SideSlot $h={47} $line>
            <Svg w={34} h={29}><path d="M6 1h8l2 7v20H4V14ZM19 1h8l3 13v14H18V8Z" fill="#8db5e3" stroke="#4374ad" strokeWidth="1.200" /><path d="M14 9h6v9h-6Z" fill="#8db5e3" /><path d="M7 10v12M22 10v12" stroke="#dcecfb" strokeWidth="3" /><path d="M5 22h10v5H5ZM19 22h10v5H19Z" fill="#b8d3f2" /><path d="M6 1h8v3H6ZM19 1h8v3H19Z" fill="#47658b" /></Svg>
          </SideSlot>
          <SideSlot $h={4} />
          {sideIcons.map((s, i) => <SideSlot key={i}>{s.icon}{s.more && <Tri dir="r" s={0.6} c="#566f96" />}</SideSlot>)}
          <SideSlot><CallLog><div>SCH</div><div>CALL</div><div>LOG</div></CallLog></SideSlot>
          <SideSlot>
            <Svg w={35} h={30}><path d="M4 3h10M7 6h11M9 9h9M4 13h9M6 16h10M6 19h8M6 22h11M7 26h8" stroke="#888" strokeWidth="1.200" strokeDasharray="3 1" /><path d="M18 19 33 4" stroke="#777" strokeWidth="5.500" /><path d="M19 18 33 4" stroke="#f5e92c" strokeWidth="4.500" /><path d="m31 6 3-3" stroke="#c22" strokeWidth="5" /><path d="m15 22 2-5 3 3Z" fill="#333" /></Svg>
          </SideSlot>
          <More>»</More>
        </Side>

        <Pane>
          <ActionBar>
            <Action $w={80}>
              <ActionIcon $w={23}><Svg w={17}><path d="m3 3 11 11M14 3 3 14" stroke="#b8771f" strokeWidth="5.500" /><path d="m3 3 11 11M14 3 3 14" stroke="#f8b14c" strokeWidth="3.500" /></Svg></ActionIcon>
              <Fit w={43}>Close</Fit>
            </Action>
            <Action $w={141}>
              <ActionIcon $w={26}><Svg w={23} h={22}><path d="M4 1h11l4 4v16H4Z" fill="#f7f8f3" stroke="#999" /><path d="M0 13h5v-2l4 3-4 4v-2H0ZM23 13h-5v-2l-3 3 3 4v-2h5Z" fill="#ef9d2e" /><path d="M12 8v9M8 13h8" stroke="#55b833" strokeWidth="3" /></Svg></ActionIcon>
              <Fit w={99}>Save as Draft</Fit>
            </Action>
            <Action $w={183}>
              <ActionIcon $w={24}><Svg w={20}><path d="M1 18V5h6l2 2h7v4" fill="#f4bd66" stroke="#a9711c" /><path d="m1 18 4-8h14l-4 8Z" fill="#ffd487" stroke="#a9711c" /><path d="M12 1h4v4h2l-4 4-4-4h2Z" fill="#6fa8e2" stroke="#3f70a8" strokeWidth=".8" /></Svg></ActionIcon>
              <Fit w={146}>Save as Draft &amp; Exit</Fit>
            </Action>
            <Action $w={157}>
              <ActionIcon $w={26}><Svg w={24} h={23}><path d="M2 22v-3l5-3h12l4 6Z" fill="#f4e92d" stroke="#111" /><path d="m4 8 8-7 9 10-8 8Z" fill="#fff" stroke="#111" /><path d="m7 8 5-4m-3 7 6-5m-3 8 6-5m-4 7 5-4" stroke="#3048a8" strokeWidth="1.300" /><path d="M1 3h5M3 6h6" stroke="#25a144" strokeWidth="2" /><path d="m6 0 5 4-5 4Z" fill="#25a144" /><path d="m14 17 7-1" stroke="#2795c5" strokeWidth="3.500" /></Svg></ActionIcon>
              <Fit w={117}>Customer Copy</Fit>
            </Action>
            <Action $w={149}>
              <ActionIcon $w={25}><Svg w={23} h={21}><path d="M4 1h13l4 3v16H4Z" fill="#f2f2f0" stroke="#aaa" /><path d="M0 7h7v8H0Z" fill="#294d98" /><path d="m6 9 5-3 6 4v6l-4 4c-2 0-2-2-2-4l-5-1Z" fill="#b3b5b8" stroke="#888" /></Svg></ActionIcon>
              <Fit w={109}>Change Status</Fit>
            </Action>
            <Fit w={220}>Mark Replication Unsuccesful</Fit>
          </ActionBar>

          <Viewport>
            <Page>
              <Columns $h={165}>
                <Column $w={70} $pad={11}>{three.map((i) => <Slot key={i}><CornerMarks /></Slot>)}</Column>
                <Column $w={237} $pad={11}>{three.map((i) => <Slot key={i}><CornerMarks /><GreyButton $gap={165} $top={12} /></Slot>)}</Column>
                <Column $w={243} $pad={11}>{three.map((i) => <Slot key={i}><CornerMarks /></Slot>)}</Column>
                <Column $w={78} $pad={11}>{three.map((i) => <Slot key={i} $left={28}><CornerMarks /></Slot>)}</Column>
                <Column $w={76} $pad={11}>{three.map((i) => <Slot key={i} $left={27}><CornerMarks /></Slot>)}</Column>
                <Column $w={141} $pad={11}>{three.map((i) => <Slot key={i} $left={41}><Value $w={17} $top={13}>25</Value><GreyButton $gap={50} $top={13} /></Slot>)}</Column>
                <Column $w={92} $pad={11}>{three.map((i) => <Slot key={i} $left={0}><Value $w={85} $top={12} $align="right" $size={16}>0.00</Value></Slot>)}</Column>
                <Column $w={365} $pad={11}>{three.map((i) => <Slot key={i} $left={163}><CornerMarks /><DropMark><Tri dir="d" s={0.7} /></DropMark></Slot>)}</Column>
                <Column $w={120} $bottom={false} $pad={11}>
                  {three.map((i) => <Slot key={i} $left={5}><CellTop><Remove /></CellTop>{i === 2 && <Plus>++</Plus>}</Slot>)}
                </Column>
              </Columns>
              <Columns $h={26.5}>
                <Column $w={307}><Value $w={200} $top={1} $left={5}><Fit w={108}>Labour Estimate</Fit></Value></Column>
                <Column $w={243} />
                <Column $w={154} />
                <Column $w={141} />
                <Column $w={92} />
                <Column $w={365} />
                <Column $w={20} $bottom={false} />
              </Columns>
              <Columns $h={73.500}>
                <Column $w={70}>
                  <Slot $h={35.300} $left={4}><Lifted><CornerMarks /></Lifted></Slot>
                  <Slot $h={35.300} $left={5}><Lifted><CornerMarks /></Lifted></Slot>
                </Column>
                <Column $w={237}>
                  <Slot $h={35.300}><Value $w={60} $top={3}><Fit w={45}>Day(s)</Fit></Value></Slot>
                  <Slot $h={35.300}><Value $w={60} $top={3}><Fit w={45}>Day(s)</Fit></Value></Slot>
                </Column>
                <Column $w={243}>
                  <Slot $h={35.300} $left={4}><Value $w={180} $top={3}><Fit w={102}>Labour in-hours</Fit></Value></Slot>
                  <Slot $h={35.300} $left={5}><Value $w={180} $top={3}><Fit w={128}>Labour out-of-hours</Fit></Value></Slot>
                </Column>
                <Column $w={154}>
                  <Slot $h={35.300} $left={0}><Value $w={152} $top={1} $align="center">585</Value></Slot>
                  <Slot $h={35.300} $left={0}><Value $w={152} $top={1} $align="center">700</Value></Slot>
                </Column>
                <Column $w={233}>
                  <Slot $h={35.300} $left={0}><Value $w={226} $top={3} $align="right" $size={16}>0.00</Value></Slot>
                  <Slot $h={35.300} $left={0}><Value $w={226} $top={3} $align="right" $size={16}>0.00</Value></Slot>
                </Column>
                <Column $w={20} $bottom={false} />
              </Columns>
              <Columns $h={8}>
                <Column $w={550} $open $bottom={false} />
                <Column $w={154} $bottom={false} />
                <Column $w={141} $bottom={false} />
                <Column $w={92} $bottom={false}><TotalClip><Value $w={84} $top={2} $align="right" $bold>0.00</Value></TotalClip></Column>
                <Column $w={20} $bottom={false} />
              </Columns>
              <Rule />
              <Note>{noteLines.map(([t, w], i) => <NoteLine key={i}><Fit w={w}>{t}</Fit></NoteLine>)}</Note>
            </Page>
            <VScroll>
              <Raised><Tri dir="u" /></Raised>
              <Push />
              <Raised $h={165}>{null}</Raised>
              <Raised $h={22}><Tri dir="d" /></Raised>
            </VScroll>
          </Viewport>
          <HScroll>
            <Raised $w={23}><Tri dir="l" /></Raised>
            <Raised $w={1060}>{null}</Raised>
            <Push />
            <Raised><Tri dir="r" /></Raised>
            <Corner />
          </HScroll>
          <Protected><Fit w={347}>This is the protected text area of the form.</Fit></Protected>
        </Pane>
      </Work>

      <Status>
        <StatusPart $w={36} $line />
        <StatusPart $w={1312}><Tri dir="u" s={0.6} c="#41597f" /></StatusPart>
        <StatusPart $w={15} $line />
        <StatusPart $w={114}><Svg w={26} h={15}><path d="M1 1h12v12H1Z" fill="#b8dcf3" stroke="#346b99" /><path d="M3 4h3v3H3ZM8 6h3v4H8Z" fill="#fff" stroke="#68a" strokeWidth=".6" /><path d="M12 3h8v11H5" fill="#f3bf6e" stroke="#9c6a28" /><path d="m13 12 11-10" stroke="#222" strokeWidth="4.500" /><path d="m14 11 8-7" stroke="#f5dc3a" strokeWidth="2.500" /><path d="m22 4 2-2" stroke="#c22" strokeWidth="3.500" /></Svg></StatusPart>
        <StatusPart $w={42}><Svg w={23} h={15}><path d="M1 13 9 3h4l4 5v5h-3M1 13h3l6-7" stroke="#aeb2bc" strokeWidth="1.300" /><path d="M14 8h7v6h-7ZM16 8V5h3v3" fill="#f5f5f5" stroke="#aeb2bc" /></Svg></StatusPart>
        <StatusPart $w={61}><Fit w={41}>Online</Fit></StatusPart>
        <StatusPart $w={12}><Tri dir="u" s={0.6} c="#41597f" /></StatusPart>
      </Status>

      <TaskBar>
        <StartButton $w={69} $gap={0}><Flag /><b><Fit w={39}>Start</Fit></b></StartButton>
        <Divider />
        <Quick><Svg w={37} h={38}><path d="m6 1 30 1v35H6Z" fill="#74b8dc" stroke="#5aa0c8" /><path d="M1 2h29v34H1Z" fill="#a9d9ef" stroke="#69aed1" /><circle cx="15.500" cy="18" r="12.500" fill="#f07d22" stroke="#fbe0c4" /><path d="M11 10v16l13-8Z" fill="#fff" /></Svg></Quick>
        {tasks.map((t, i) => (
          <Task key={i} $w={t.w} $gap={t.gap} $active={t.active}>{t.icon}<Fit w={t.tw}>{t.text}</Fit></Task>
        ))}
        <Power>
          <Battery>98%</Battery><Nub />
          <Svg w={21} h={18}><path d="M1 9h4" stroke="#0a0a0a" strokeWidth="2.500" /><path d="M4 9c0-4 3-6 7-6h3v12h-3c-4 0-7-2-7-6Z" fill="#0a0a0a" /><path d="M13 5.500h7M13 12.500h7" stroke="#0a0a0a" strokeWidth="3" /></Svg>
        </Power>
        <Tray>
          <TrayIcon $w={22}><Svg w={8} h={12}><path d="m1 5 3-3 3 3M1 10l3-3 3 3" stroke="#111" strokeWidth="1.600" /></Svg></TrayIcon>
          <TrayIcon $w={33}><Svg w={24} h={24}><path d="M2 3h3V1h5v2h3v19H2Z" fill="#f8f8f8" stroke="#777" strokeWidth="1.300" /><path d="M15 2v4M20 2v4M13 6h9v4c0 3-7 3-7 0ZM17 12v10h3V12" fill="#eee" stroke="#777" strokeWidth="1.200" /></Svg></TrayIcon>
          <TrayIcon $w={34}><Svg w={24} h={24}><path d="M6 6h17v13H6Z" fill="#9b9b9b" stroke="#f1f1f1" strokeWidth="2" /><path d="M5 5h19v15H5Z" stroke="#777" strokeWidth=".7" /><path d="M10 22h10" stroke="#eee" strokeWidth="3" /><path d="M1 2h8v8H6v11H3V10H1Z" fill="#e8e8e8" stroke="#777" strokeWidth="1.200" /></Svg></TrayIcon>
          <TrayIcon $w={23}><Svg w={22} h={24}><path d="M1 8h4l7-7v21l-7-7H1Z" fill="#f6f6f6" stroke="#777" strokeWidth="1.200" /><circle cx="15" cy="16" r="5.500" fill="#f7e7e7" stroke="#d32426" strokeWidth="2.200" /><path d="m11 12 8 8" stroke="#d32426" strokeWidth="2.200" /></Svg></TrayIcon>
          <Clock><Fit w={40}>15:02</Fit><Fit w={82}>25/01/2018</Fit></Clock>
          <Svg w={20} h={17}><path d="M0 1h20v14H0Z" fill="#2b62c8" stroke="#7c9fdc" /><path d="M1 2h18L1 12Z" fill="#6fa2ee" /></Svg>
        </Tray>
      </TaskBar>
    </Screen>
  );
}
